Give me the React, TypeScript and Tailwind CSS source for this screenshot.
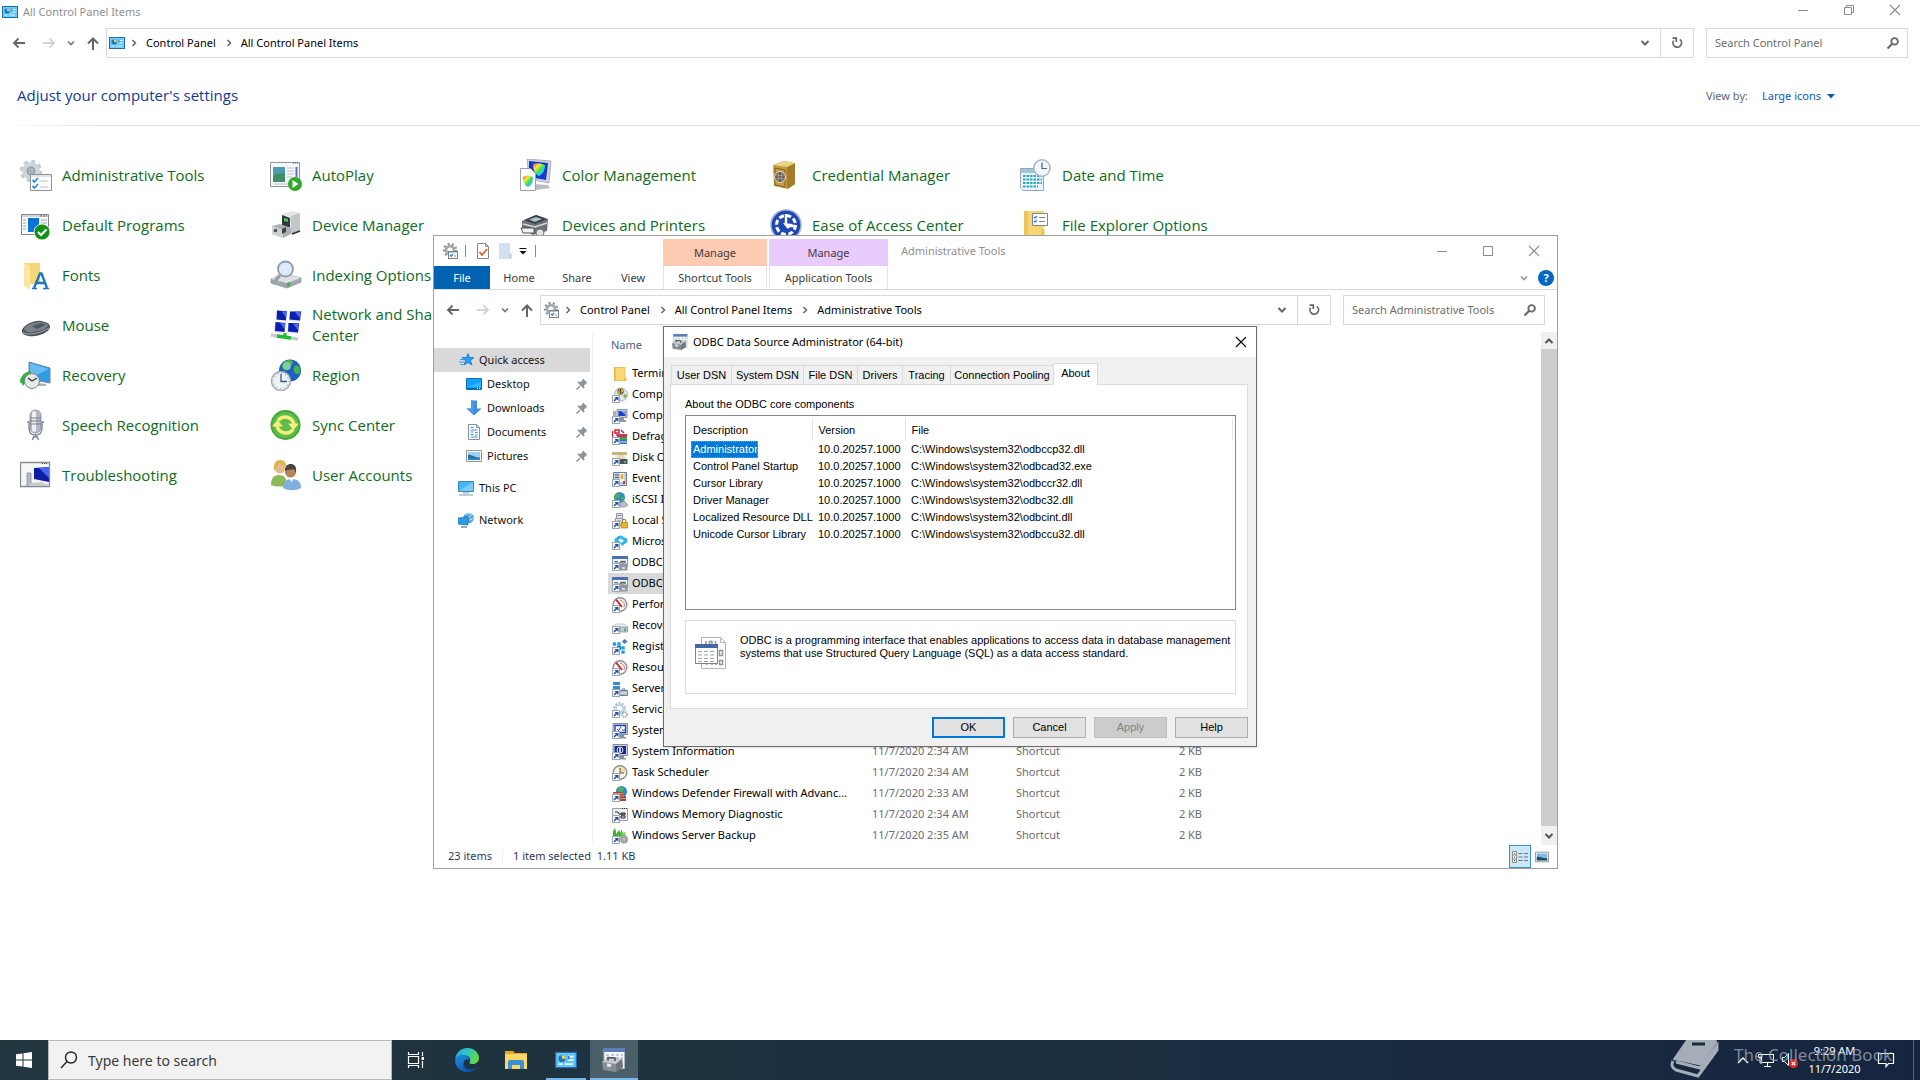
import type { ReactNode } from 'react';

type IconProps = { className?: string };
const UI = "font-['Noto_Sans','Open_Sans',sans-serif]";

function Svg({ size = 16, box = size, className = '', children }: { size?: number; box?: number; className?: string; children: ReactNode }) {
  return (
    <svg width={size} height={size} viewBox={`0 0 ${box} ${box}`} fill="none" className={`shrink-0 ${className}`} aria-hidden="true">
      {children}
    </svg>
  );
}

/* ---------- Line glyphs ---------- */

const ArrowLeft = ({ className = '' }: IconProps) => (
  <Svg className={className}>
    <path d="M14 8H3M7.500 3.500L3 8l4.500 4.500" stroke="currentColor" strokeWidth="1.800" />
  </Svg>
);
const ArrowRight = ({ className = '' }: IconProps) => (
  <Svg className={className}>
    <path d="M2 8h11M8.500 3.500L13 8l-4.500 4.500" stroke="currentColor" strokeWidth="1.800" />
  </Svg>
);
const ArrowUp = ({ className = '' }: IconProps) => (
  <Svg className={className}>
    <path d="M8 15V4M3 8.500L8 3.500l5 5" stroke="currentColor" strokeWidth="2" />
  </Svg>
);
const ChevronDown = ({ className = '', thin }: IconProps & { thin?: boolean }) => (
  <Svg size={12} className={className}>
    <path d={thin ? 'M3 4.500l3 3 3-3' : 'M2.500 4l3.500 3.500L9.500 4'} stroke="currentColor" strokeWidth={thin ? 1.6 : 2} />
  </Svg>
);
const ChevronRight = () => (
  <Svg size={8} className="text-[#666]">
    <path d="M2.500 1l3 3-3 3" stroke="currentColor" strokeWidth="1.500" />
  </Svg>
);
const Refresh = () => (
  <Svg size={14} className="text-[#666]">
    <path d="M9.800 3.400A4.300 4.300 0 1 1 3.600 4.600" stroke="currentColor" strokeWidth="1.700" />
    <path d="M2.500 2.200h3.800V6" stroke="currentColor" strokeWidth="1.700" />
  </Svg>
);
const Magnifier = () => (
  <Svg size={14} className="text-[#666]">
    <circle cx="8.600" cy="5.400" r="3.300" stroke="currentColor" strokeWidth="1.800" />
    <path d="M6.200 7.800L1.500 12.500" stroke="currentColor" strokeWidth="2" />
  </Svg>
);
const Minimise = () => (
  <Svg size={12}>
    <path d="M1 6.500h10" stroke="currentColor" />
  </Svg>
);
const Maximise = () => (
  <Svg size={12}>
    <path d="M1.500 1.500h9v9h-9z" stroke="currentColor" />
  </Svg>
);
const Restore = () => (
  <Svg size={12}>
    <path d="M1.500 3.500h7v7h-7zM3.500 3.500v-2h7v7h-2" stroke="currentColor" />
  </Svg>
);
const Close = () => (
  <Svg size={12}>
    <path d="M1 1l10 10M11 1L1 11" stroke="currentColor" strokeWidth="1.100" />
  </Svg>
);

/* ---------- Small colour icons ---------- */

const PanelIcon = ({ size = 16 }: { size?: number }) => (
  <Svg size={size} box={16}>
    <rect x="0.500" y="2.500" width="15" height="11" fill="#8ad6fa" stroke="#1b6fb0" />
    <rect x="1.500" y="3.500" width="13" height="9" fill="#5fc3f5" />
    <circle cx="5" cy="7" r="2.500" fill="#1b76bd" />
    <path d="M5 7V4.500A2.500 2.500 0 0 1 7.500 7z" fill="#ffd24a" />
    <path d="M9.500 5.500h4M9.500 8h4" stroke="#fff" strokeWidth="1.200" />
    <path d="M2.500 11h3M7 11h6" stroke="#e8f7ff" strokeWidth="1.200" />
    <path d="M10 5v2.500" stroke="#1b76bd" />
  </Svg>
);

const Tick = ({ d, color = '#2f7fd0', w = 1.3 }: { d: string; color?: string; w?: number }) => <path d={d} stroke={color} strokeWidth={w} />;

const ToolsIcon = () => (
  <Svg>
    <circle cx="8" cy="7" r="6" stroke="#8b9297" strokeWidth="2.400" strokeDasharray="2 2.190" />
    <circle cx="8" cy="7" r="3.900" stroke="#a3aaaf" strokeWidth="2.600" />
    <rect x="6.500" y="8.500" width="9" height="7" fill="#fff" stroke="#7c8388" />
    <path d="M7 9.500h8" stroke="#b6c4cf" />
    <Tick d="M8 12l1.200 1.200L11 11" />
    <path d="M12 13h2" stroke="#5da2dd" />
  </Svg>
);

function Linked({ children }: { children: ReactNode }) {
  return (
    <Svg>
      {children}
      <rect x="0.500" y="8.500" width="7" height="7" fill="#fff" stroke="#9aa6b3" />
      <path d="M2 14L5 11" stroke="#27509c" strokeWidth="1.600" />
      <path d="M2.500 10h4v4z" fill="#27509c" />
    </Svg>
  );
}

const FolderIcon = () => (
  <Svg>
    <path d="M2 1h11v10l1 0v4H2z" fill="#fbd976" />
    <path d="M2 1h2v14H2z" fill="#f0c457" />
    <path d="M2.500 1.500h10.500v9.500M2.500 1.500v13h11.500" stroke="#e4b64c" strokeWidth="0.800" />
    <path d="M12 11.500h2.500V15H12z" fill="#f2c14e" />
  </Svg>
);
const ComponentIcon = () => (
  <Linked>
    <circle cx="9" cy="7.500" r="6.500" fill="#dfe6ec" stroke="#a9b4bd" />
    <circle cx="8.500" cy="4.500" r="3" fill="#f4c531" stroke="#94751a" />
    <path d="M6 3l5 3M8.500 2v5" stroke="#3f4d5b" />
    <circle cx="13" cy="9" r="1.700" fill="#6cb348" />
  </Linked>
);
const ComputerIcon = () => (
  <Linked>
    <path d="M5 1.500h10v8H5z" fill="#c9ced6" stroke="#8c95a1" />
    <path d="M6.500 3h7v5h-7z" fill="#1c3fc6" />
    <path d="M9 3h4.500v4z" fill="#7fa1ff" />
    <path d="M1 3h3v8H1z" fill="#a8b0b8" />
    <path d="M8 10h4v2h2v2H8z" fill="#8d969f" />
  </Linked>
);
const DefragIcon = () => (
  <Linked>
    <path d="M0.500 2v6M3 1h4v3H3z" stroke="#d11f2f" strokeWidth="1.500" />
    <path d="M9 1l3 3M4 6h8" stroke="#8a3aa8" strokeWidth="1.500" />
    <path d="M5 5h10v4H5z" fill="#d23346" />
    <path d="M7 8h8v3H7z" fill="#3a9f4a" />
    <path d="M8 11h7v4H8z" fill="#376fc2" />
    <path d="M8 13h7" stroke="#d9dee3" />
  </Linked>
);
const DiskIcon = () => (
  <Linked>
    <path d="M0 2h15v3H0z" fill="#c6b37d" />
    <path d="M5 5h7l2 4H4z" fill="#e5dcbc" />
    <path d="M7 9h8.500v5H7z" fill="#4a5158" />
    <path d="M12 12h2" stroke="#56d95a" strokeWidth="1.500" />
  </Linked>
);
const EventIcon = () => (
  <Linked>
    <path d="M1.500 1.500h13v13h-13z" fill="#c3cfdf" stroke="#6a7f9d" />
    <path d="M3 4h4M3 6.500h4" stroke="#3f5f94" />
    <path d="M8 2h4v9H8z" fill="#f4f7fb" />
    <path d="M10 3v5" stroke="#e9a713" strokeWidth="2.500" />
    <path d="M11 10h2v3h-2z" fill="#d23535" />
  </Linked>
);
const GlobeDriveIcon = () => (
  <Linked>
    <circle cx="7.500" cy="5.500" r="5.500" fill="#2f87c9" />
    <path d="M4 2c3-1 5 0 4 2S4 6 3 8 2 4 4 2zM9 5c2-1 4 1 3 3l-2 2z" fill="#4fae48" />
    <path d="M8 11l4-2 4 4-3 2H8z" fill="#b8c1ca" stroke="#7c8791" strokeWidth="0.700" />
  </Linked>
);
const PolicyIcon = () => (
  <Linked>
    <path d="M4.500 0.500h6v5h-6zM3.500 5.500h7v7h-7z" fill="#e2e6ea" stroke="#8d959d" />
    <path d="M5.500 2.500h4M5 8h4" stroke="#77818b" />
    <path d="M9 9.500h6.500v5.500H9z" fill="#e8b429" stroke="#b07f12" strokeWidth="0.700" />
    <path d="M10.500 9.500V8a1.700 1.700 0 0 1 3.400 0v1.500" stroke="#a27514" />
  </Linked>
);
const CloudIcon = () => (
  <Linked>
    <path d="M4 9a3 3 0 0 1 .5-5.500A4.500 4.500 0 0 1 12 3.500a3.200 3.200 0 0 1 1 6.300L10 12l-2-3z" fill="#36b4e5" />
    <path d="M6 6l3-1.500L12 7 9 9z" fill="#e9f8ff" />
  </Linked>
);
const OdbcIcon = () => (
  <Linked>
    <path d="M0.500 1.500h15v10h-15z" fill="#f3f6f9" stroke="#8c9dae" />
    <path d="M0 1h16v3H0z" fill="#4a6fae" />
    <path d="M2 6.500h4M3 8h9" stroke="#6c7883" />
    <path d="M7 8.500h8.500v7H8z" fill="#8f979e" />
    <path d="M9 8V6.500h4V8" stroke="#596269" strokeWidth="1.300" />
    <path d="M10 12h3v2h-3z" fill="#d7dce0" />
  </Linked>
);
const GaugeIcon = () => (
  <Linked>
    <circle cx="8" cy="7.500" r="6.800" fill="#fbfbfb" stroke="#8e949a" strokeWidth="1.500" />
    <path d="M4 2.500l6 7.500" stroke="#d3242a" strokeWidth="2" />
    <path d="M8 3a5 5 0 0 1 4 7" stroke="#c0795c" />
  </Linked>
);
const DriveIcon = () => (
  <Linked>
    <path d="M1 8l3-2h8l3.500 2v5H1z" fill="#f0f1f2" stroke="#b9bec3" strokeWidth="0.800" />
    <path d="M8 9h7.500v5H8z" fill="#c3c9ce" stroke="#8c949b" strokeWidth="0.800" />
    <path d="M13 10.500v2.500" stroke="#32a642" strokeWidth="1.600" />
  </Linked>
);
const RegistryIcon = () => (
  <Linked>
    <path d="M0.500 3h4v4h-4zM5 3h4v4H5zM9 7h4v4H9zM9 11h4v4H9z" fill="#19a0d8" stroke="#fff" strokeWidth="0.600" />
    <path d="M5 7h4v4H5z" fill="#1385b8" />
    <path d="M12.500 0l3 2.500-3 2.500-2.500-2.500z" fill="#3b7fb8" />
  </Linked>
);
const ServerIcon = () => (
  <Linked>
    <path d="M1 1h7v3H1zM1 5h7v3H1z" fill="#2f8fd3" />
    <path d="M7.500 9.500h8v5h-8z" fill="#a8b9c6" stroke="#6a8294" />
    <path d="M10 9V8h3v1" stroke="#6a8294" />
    <path d="M8 12h7" stroke="#e9f0f5" />
  </Linked>
);
const ServicesIcon = () => (
  <Linked>
    <circle cx="7.500" cy="6.500" r="5.300" stroke="#9fc0d8" strokeWidth="2.200" strokeDasharray="1.900 1.430" />
    <circle cx="7.500" cy="6.500" r="3.600" stroke="#b5d1e4" strokeWidth="1.800" />
    <circle cx="12.500" cy="12.500" r="2.500" stroke="#93a9b9" strokeWidth="1.800" strokeDasharray="1.300 0.700" />
  </Linked>
);
const SysConfigIcon = () => (
  <Linked>
    <path d="M1 0.500h14.500v11H1z" fill="#cfd4da" stroke="#858d96" />
    <path d="M3 2.500h10.500v7H3z" fill="#fff" stroke="#1a3dbb" strokeWidth="1.300" />
    <path d="M5 6l1.500 1.500L9 4M10 7h3" stroke="#1a3dbb" />
    <path d="M8 12h4v2h2v1.500H8z" fill="#8b939c" />
  </Linked>
);
const SysInfoIcon = () => (
  <Linked>
    <path d="M1 0.500h14.500v11H1z" fill="#cfd4da" stroke="#858d96" />
    <path d="M2.500 2h11.500v8H2.500z" fill="#14288f" />
    <circle cx="8" cy="6" r="3" stroke="#dfe6ff" />
    <path d="M8 4v4.500" stroke="#fff" strokeWidth="1.500" />
    <path d="M8 12h4v2h2v1.500H8z" fill="#8b939c" />
  </Linked>
);
const ClockIcon = () => (
  <Linked>
    <circle cx="8" cy="7.500" r="6.800" fill="#f6f2e4" stroke="#8d9094" strokeWidth="1.400" />
    <path d="M8 7.500V2a5.500 5.500 0 0 1 5.500 5.500z" fill="#f3df9c" />
    <path d="M8 3v5h4" stroke="#555" />
  </Linked>
);
const FirewallIcon = () => (
  <Linked>
    <circle cx="9.500" cy="5.500" r="5.500" fill="#2f87c9" />
    <path d="M8 1c3 0 5 1 4 3s-4 1-4 3-4-5 0-6z" fill="#55b24e" />
    <path d="M1 6h10v4h3v5H7V8H1z" fill="#a54a36" />
    <path d="M1 7.500h10M7 10h5M7 12.500h7" stroke="#e2b7a8" strokeWidth="0.700" />
  </Linked>
);
const MemoryIcon = () => (
  <Linked>
    <path d="M0.500 1.500h15v12h-15z" fill="#f1f2f4" stroke="#999fa6" />
    <path d="M10 1.500h5" stroke="#444" strokeDasharray="1 1" />
    <path d="M3 5h3l1 2h6M9 6h4v2H9zM9 9h4v2H9z" stroke="#2d2d2d" />
  </Linked>
);
const BackupIcon = () => (
  <Linked>
    <path d="M1 8V3l2-3 1 3v3l3-4 2 3V1l2 4v4z" fill="#46b338" />
    <path d="M9 6l4-2 1 5-3 1z" fill="#7fcf5d" />
    <circle cx="12" cy="11.500" r="4" fill="#9aa3aa" />
    <circle cx="12" cy="11.500" r="1.500" fill="#e2b6a0" />
  </Linked>
);

/* ---------- Navigation pane icons ---------- */

const StarIcon = () => (
  <Svg>
    <path d="M9 1.500l1.500 4 4.500 0-3.500 3 1.500 4.500-4-2.500L5 13l1.500-4.500L3 5.500l4.500 0z" fill="#2a9df4" stroke="#1479c9" strokeWidth="0.800" />
    <path d="M1 7.500h4M0 10h5M1.500 12.500h3" stroke="#2a9df4" />
  </Svg>
);
const DesktopIcon = () => (
  <Svg>
    <path d="M0.500 2.500h15v11h-15z" fill="#12a1f5" stroke="#0a6fc4" />
    <path d="M1 11l14-5v5z" fill="#35b6ff" />
    <path d="M1 12.500h14" stroke="#0b5ea6" />
    <path d="M11 12.500h3" stroke="#fff" strokeDasharray="1 1" />
  </Svg>
);
const DownloadIcon = () => (
  <Svg>
    <path d="M5 0.500h6v8h4.500L8 15.500.5 8.500H5z" fill="#3f8ede" />
    <path d="M5 0.500h3v15L.5 8.500H5z" fill="#4c98e4" />
  </Svg>
);
const DocumentIcon = () => (
  <Svg>
    <path d="M2.500 0.500h8l3 3v12h-11z" fill="#fff" stroke="#86919b" />
    <path d="M10.500 0.500v3h3" stroke="#86919b" />
    <path d="M4.500 3.500h3M4.500 6h7M4.500 8h3M9 8.500h2.500M4.500 10.500h3M9 11h2.500M4.500 13h7" stroke="#3a96d2" />
  </Svg>
);
const PictureIcon = () => (
  <Svg>
    <path d="M0.500 2.500h15v11h-15z" fill="#fff" stroke="#8d959c" />
    <path d="M2 4h12v8H2z" fill="#9ad0f5" />
    <path d="M2 7c3-1 6 3 12 2.500V12H2z" fill="#2d6a8a" />
    <path d="M2 10h12v2H2z" fill="#1d8bd0" />
  </Svg>
);
const PcIcon = () => (
  <Svg>
    <path d="M0.500 1.500h15v10h-15z" fill="#4cb7f5" stroke="#3c86b8" />
    <path d="M1 11L15 2v9z" fill="#7accfb" />
    <path d="M5 13h6M1 15h14" stroke="#84a0b4" strokeWidth="1.200" />
  </Svg>
);
const NetworkIcon = () => (
  <Svg>
    <circle cx="10.500" cy="6" r="5.300" fill="#4f9fd4" />
    <path d="M7 3c2-2 6-2 6 0s-4 2-4 4M11 8c2 0 4-2 4-2" stroke="#a8dbf7" strokeWidth="1.300" />
    <path d="M0 6l10-1v8L0 12z" fill="#2f9be6" stroke="#1b6fae" strokeWidth="0.700" />
    <path d="M3 15h6" stroke="#557b93" strokeWidth="1.300" />
  </Svg>
);
const PinIcon = () => (
  <Svg size={12} className="text-[#8a949d]">
    <path d="M7 0.500L11.500 5l-1.500.5-2 2 .5 2.500-1 .5L1.500 4.500 2 3.500l2.500.5 2-2z" fill="currentColor" />
    <path d="M4 8L0.500 11.500" stroke="currentColor" strokeWidth="1.500" />
  </Svg>
);

/* ---------- Large control panel icons ---------- */

const Big = ({ children }: { children: ReactNode }) => <Svg size={32}>{children}</Svg>;

const AdminTools = () => (
  <Big>
    <circle cx="11" cy="12" r="9.500" stroke="#c3cbd1" strokeWidth="3.500" strokeDasharray="3.900 3.560" />
    <circle cx="11" cy="12" r="6.500" stroke="#cfd6db" strokeWidth="5" />
    <circle cx="11" cy="12" r="4" stroke="#8e989f" fill="#aab4bb" />
    <path d="M10.500 15.500h21v16h-21z" fill="#fbfcfd" stroke="#8c9297" />
    <path d="M11 17h20" stroke="#d4dde4" strokeWidth="1.500" />
    <Tick d="M12.500 21l2 2 3.500-4M12.500 27l2 2 3.500-4" color="#3a8edb" w={1.8} />
    <path d="M19.500 22h8M19.500 28h8" stroke="#b9bfc4" />
  </Big>
);
const AutoPlay = () => (
  <Big>
    <path d="M0.500 3.500h29v24h-29z" fill="#f7f9fa" stroke="#8c9499" />
    <path d="M23 4h6" stroke="#555" strokeDasharray="1 1" />
    <path d="M3 8h12v15H3z" fill="#4f9ab0" />
    <path d="M3 17c4-4 8-1 12-3v9H3z" fill="#3f8f66" />
    <path d="M17 9h7M17 12h7M17 15h7M17 18h5M4 25h16" stroke="#b8c0c6" />
    <path d="M26.500 8v10" stroke="#5470c2" strokeWidth="2" />
    <circle cx="25" cy="25" r="7" fill="#31a82a" />
    <path d="M22.500 21l6 4-6 4z" fill="#fff" />
  </Big>
);
const ColorMgmt = () => (
  <Big>
    <defs>
      <linearGradient id="rainbow" x1="0" y1="0" x2="1" y2="1">
        <stop offset="0" stopColor="#ff3a3a" />
        <stop offset="0.300" stopColor="#ffe83a" />
        <stop offset="0.550" stopColor="#39e06a" />
        <stop offset="0.800" stopColor="#37b9ff" />
        <stop offset="1" stopColor="#b744ff" />
      </linearGradient>
    </defs>
    <path d="M7 0l24 2-2 22-20-4z" fill="#cfd4dc" stroke="#9aa2ad" strokeWidth="0.800" />
    <path d="M9 2l19 2-2 17-17-3z" fill="#1437cf" />
    <path d="M13 5c6-2 9 0 12 1 0 6-2 9-6 11-4-2-6-6-6-12z" fill="url(#rainbow)" />
    <path d="M14 25l14 1 2 3-14 2z" fill="#b7bdc5" />
    <path d="M0.500 9.500h10l5 5v17h-15z" fill="#fff" stroke="#9aa0a8" />
    <path d="M3 18c4-2 7-2 10 0 0 5-1 8-5 10-4-2-5-5-5-10z" fill="url(#rainbow)" />
  </Big>
);
const Credential = () => (
  <Big>
    <path d="M3 6L14 2l11 2v21l-7 5-14-3z" fill="#c39a3f" />
    <path d="M17 8l8-4v21l-8 5z" fill="#a37c2a" />
    <path d="M3 6L14 2l11 2-8 4z" fill="#ebd182" />
    <path d="M5 9l10 2v17l-10-2z" stroke="#7e6327" />
    <circle cx="10" cy="18" r="5.500" fill="#7f7868" stroke="#dfd8c3" />
    <circle cx="10" cy="18" r="2.500" fill="#c9c4b6" />
    <path d="M10 13v10M5.500 18h9" stroke="#4b463b" />
  </Big>
);
const DateTime = () => (
  <Big>
    <path d="M0.500 9.500h23v22H3l-2.500-3z" fill="#eaf6fb" stroke="#93a6b2" />
    <path d="M1 10h22v4H1z" fill="#9fc6da" />
    <path d="M3 17h19M3 20.500h19M3 24h19M3 27.500h15" stroke="#2fa7bd" strokeWidth="2.200" strokeDasharray="2.500 1" />
    <circle cx="22" cy="9" r="8.200" fill="#f2f6f9" stroke="#aab8c3" strokeWidth="1.600" />
    <path d="M22 3.500V9.500h5" stroke="#4c6072" strokeWidth="1.200" />
  </Big>
);
const DefaultPrograms = () => (
  <Big>
    <path d="M1.500 5.500h27v20h-27z" fill="#f8fafb" stroke="#80878d" />
    <path d="M2 7h26" stroke="#cfd7dd" strokeWidth="2" />
    <path d="M20 7h7" stroke="#555" strokeDasharray="2 1" />
    <path d="M8 9h11v14H8z" fill="#0b72d8" />
    <path d="M3 11h3M3 14h3M3 17h3M3 20h3M21 11h6M21 14h6" stroke="#9aa2a8" />
    <circle cx="22" cy="23" r="8" fill="#13911a" stroke="#fff" strokeWidth="0.800" />
    <path d="M18 23l3 3 5.500-5.500" stroke="#fff" strokeWidth="2" />
  </Big>
);
const DeviceManager = () => (
  <Big>
    <path d="M12 5l10-3 8 2v18l-9 3-9-5z" fill="#e2e4e6" />
    <path d="M21 7l9-3v18l-9 3z" fill="#c4c7ca" />
    <path d="M12 6l8 3v9h-8z" fill="#31373b" />
    <path d="M14 9l4 1v3l-4-1z" fill="#46c85a" />
    <path d="M2 17l8-2 11 4v6l-8 4-11-4z" fill="#a9aeb3" />
    <path d="M2 17l11 4v8L2 25z" fill="#cfd2d5" />
    <circle cx="5.500" cy="21.500" r="1.800" fill="#4a5057" />
    <path d="M12 20l4-2v5l-4 2z" fill="#3c4248" />
    <path d="M22 25l8-3" stroke="#2c2f32" strokeWidth="1.500" />
  </Big>
);
const Printers = () => (
  <Big>
    <path d="M2 12l14-6 12 4-1 12-14 4-11-6z" fill="#6c7378" />
    <path d="M4 11L16 6l11 4-12 5z" fill="#3a3f43" />
    <path d="M9 10.500l7-2.500 6 2-7 3z" fill="#a9c1cf" />
    <path d="M3 15l12 3 12-4" stroke="#d4d9dc" strokeWidth="1.500" />
    <path d="M1 19h13v5H3z" fill="#eef1f3" stroke="#555" />
    <circle cx="20" cy="24" r="4" fill="#dfe3e6" stroke="#6c7378" />
  </Big>
);
const EaseOfAccess = () => (
  <Big>
    <circle cx="16" cy="16" r="15" fill="#1e46b5" stroke="#9cadd3" strokeWidth="1.500" />
    <circle cx="16" cy="16" r="9.500" stroke="#fff" strokeWidth="3" strokeDasharray="5 2.460" />
    <path d="M16 5v12M16 17h9" stroke="#fff" strokeWidth="2.500" />
    <path d="M13 14l5 6 5-5z" fill="#fff" />
  </Big>
);
const ExplorerOptions = () => (
  <Big>
    <path d="M4 2h20v26l2 0v3H4z" fill="#f7d774" />
    <path d="M4 2h4v29H4z" fill="#edc559" />
    <path d="M12.500 4.500h15v12h-15z" fill="#fff" stroke="#7b858d" />
    <Tick d="M14 8l1 1 2-2M14 12l1 1 2-2" />
    <path d="M19 8.500h6M19 12.500h6" stroke="#7b858d" />
    <path d="M22 20c3 0 3 4 2 8h-3z" fill="#eebf48" />
  </Big>
);
const Fonts = () => (
  <Big>
    <path d="M4 4h16v21H10l0 6-6-5z" fill="#f6d679" />
    <path d="M4 4l6 3v24l-6-4z" fill="#fbe6a4" />
    <path d="M14 29L20 14.500h1.500L27 29M16 24h8.500" stroke="#1b75bc" strokeWidth="2.300" />
    <path d="M12 29.500h5M23 29.500h6" stroke="#1b75bc" strokeWidth="1.400" />
  </Big>
);
const Indexing = () => (
  <Big>
    <path d="M1 20l13-5 17 4v4l-14 6L1 24z" fill="#a3a8ac" stroke="#878d92" strokeWidth="0.700" />
    <path d="M1 20l13-5 17 4-14 5z" fill="#dfe2e5" />
    <path d="M17 24l3-1v4l-3 1z" fill="#37bf3c" />
    <circle cx="15.500" cy="10" r="7.500" fill="#d9eaf9" fillOpacity="0.900" stroke="#8f9cab" strokeWidth="1.800" />
    <path d="M10 16L3 25" stroke="#98a1aa" strokeWidth="3.500" />
  </Big>
);
const Mouse = () => (
  <Big>
    <path d="M2 21C4 16 14 11 21 12c6 1 9 3 9 6s-6 8-15 9C8 28 1 26 2 21z" fill="#4c5157" />
    <path d="M4 20c3-5 11-7 17-7 5 1 7 2 7 4-3 4-10 5-14 6-5 1-9 0-10-3z" fill="#7b8289" />
    <path d="M12 17l9-3 5 2-9 4z" fill="#4a5863" />
    <path d="M3 23c4 4 16 2 26-4" stroke="#a9b0b6" />
  </Big>
);
const NetCenter = () => (
  <Big>
    <path d="M7 1l11 1-1 10-11-1zM20 2l12 0-2 11-11-1zM5 13l11 1-1 10-11-1zM18 14l12 0-2 11-11-1z" fill="#dfe3ea" />
    <path d="M7 1.500l10.500 1-1 9-10-1zM20 2.500l11 0-1 9-10.500-1zM5.500 13l10.500 1-1 9-10-1zM18.500 14l10.500 0-1 9.500-10-1z" fill="#0a1fae" />
    <path d="M12 2.500l5 .5-1 6zM25 3l5.500 0-1 6zM10 14l5.500.500-1 6zM23 14.500l5.500 0-1 6.500z" fill="#4b6bf0" />
    <path d="M12 12.500l18 1M18 1l-3 24" stroke="#fff" strokeWidth="1.500" />
    <path d="M1 26l10 2M20 29l8 1" stroke="#c8ccd0" strokeWidth="3.500" />
    <path d="M7 27l14 2" stroke="#1ebb34" strokeWidth="3.500" />
    <path d="M15 24v4" stroke="#1ebb34" strokeWidth="3" />
  </Big>
);
const Recovery = () => (
  <Big>
    <path d="M9 3l21 6v15L9 20z" fill="#2f9ce6" stroke="#6a8799" />
    <path d="M10 4l19 6-19 9z" fill="#67bdf3" />
    <path d="M18 24l8 1v2H16z" fill="#a9b2b9" />
    <path d="M2 24a9 9 0 0 1 9-10" stroke="#35ae3b" strokeWidth="3.500" />
    <path d="M0 20h8l-5 7z" fill="#35ae3b" />
    <circle cx="12" cy="22" r="7.500" fill="#e5e9ec" stroke="#7a858d" />
    <path d="M12 22l-4-3M12 22l5-3" stroke="#333" strokeWidth="1.300" />
  </Big>
);
const Region = () => (
  <Big>
    <circle cx="20" cy="11.500" r="11" fill="#1b5fc4" />
    <path d="M14 3c4-3 8-2 9 0s-3 3-3 6-5 3-7 1-1-5 1-7zM25 7c3-2 5 1 5 5s-3 4-5 2-2-5 0-7z" fill="#45b24d" />
    <circle cx="17" cy="7" r="4" fill="#bfe8ff" fillOpacity="0.500" />
    <circle cx="11" cy="22" r="9.500" fill="#eef2f5" stroke="#9da8b1" strokeWidth="1.400" />
    <path d="M11 15v7.500h6" stroke="#3a5d84" strokeWidth="1.300" />
    <circle cx="11" cy="22" r="7.500" stroke="#788792" strokeDasharray="1 2.930" />
  </Big>
);
const Speech = () => (
  <Big>
    <path d="M7 13h2v6c0 4 2 7 6.500 7S22 23 22 19v-6h2" stroke="#7e8894" strokeWidth="1.400" />
    <rect x="10" y="1" width="11" height="23" rx="5.500" fill="#b4bac1" stroke="#7e8894" strokeWidth="0.800" />
    <rect x="12" y="2" width="4" height="21" rx="2" fill="#eef0f2" />
    <path d="M10 9h11M10 12h11M10 15h11" stroke="#7b838b" />
    <path d="M15.500 25v3M12.500 31l1-3h4l1 3" stroke="#7e8894" strokeWidth="1.400" />
  </Big>
);
const Sync = () => (
  <Big>
    <circle cx="15.500" cy="16" r="15" fill="#43a936" />
    <circle cx="15.500" cy="16" r="13" fill="#5fbd4b" />
    <path d="M8 11.500a9 9 0 0 1 16 4M23 20.500a9 9 0 0 1-16-4" stroke="#f8ee7c" strokeWidth="3.500" />
    <path d="M18 14.500h11l-5.500 6.500zM2 17.500L7.500 11 13 17.500z" fill="#f8ee7c" />
  </Big>
);
const Trouble = () => (
  <Big>
    <path d="M0.500 3.500h29v24h-29z" fill="#f5f6f7" stroke="#858b90" strokeWidth="1.300" />
    <path d="M22 4.500h6" stroke="#444" strokeDasharray="1 1" />
    <path d="M7 14h4v13H7z" fill="#b8bdc3" stroke="#7d838a" strokeWidth="0.700" />
    <path d="M14 9l15-1v15l-15-3z" fill="#0e1da6" />
    <path d="M19 9l10-1v11z" fill="#4a68ee" />
    <path d="M11 24l10-1 8 3v1H8z" fill="#c7ccd1" />
  </Big>
);
const Users = () => (
  <Big>
    <path d="M1 26c0-7 3-10 8-10s8 3 8 10c-5 2-11 2-16 0z" fill="#8dbb58" />
    <circle cx="10" cy="9" r="5.500" fill="#e6b98f" />
    <path d="M4 12c-1-8 2-11 6-11s6 2 6 6c-3 0-6-1-7-3-1 2-3 4-5 8z" fill="#d9b54b" />
    <path d="M13 29c0-6 3-9 9-9s9 3 9 9c-5 3-13 3-18 0z" fill="#7fb1de" />
    <path d="M19 19h5l-2.500 4z" fill="#fff" />
    <circle cx="20.500" cy="13" r="5.500" fill="#b98158" />
    <path d="M15 12c0-6 3-7 6-7s6 2 5 9l-2-4c-3 1-6 0-9 2z" fill="#4a4440" />
  </Big>
);

const panelRows: [string, () => ReactNode][][] = [
  [
    ['Administrative Tools', AdminTools],
    ['AutoPlay', AutoPlay],
    ['Color Management', ColorMgmt],
    ['Credential Manager', Credential],
    ['Date and Time', DateTime],
  ],
  [
    ['Default Programs', DefaultPrograms],
    ['Device Manager', DeviceManager],
    ['Devices and Printers', Printers],
    ['Ease of Access Center', EaseOfAccess],
    ['File Explorer Options', ExplorerOptions],
  ],
  [
    ['Fonts', Fonts],
    ['Indexing Options', Indexing],
  ],
  [
    ['Mouse', Mouse],
    ['Network and Sharing Center', NetCenter],
  ],
  [
    ['Recovery', Recovery],
    ['Region', Region],
  ],
  [
    ['Speech Recognition', Speech],
    ['Sync Center', Sync],
  ],
  [
    ['Troubleshooting', Trouble],
    ['User Accounts', Users],
  ],
];

/* ---------- Shared window parts ---------- */

function NavBar({ icon, crumbs, search }: { icon: ReactNode; crumbs: string[]; search: string }) {
  return (
    <div className="flex h-[30px] pr-3">
      <nav className="flex w-[106px] shrink-0 items-center pl-[11px]">
        <button aria-label="Back" className="text-[#666]"><ArrowLeft /></button>
        <button aria-label="Forward" className="ml-3.5 text-[#d4d4d4]"><ArrowRight /></button>
        <button aria-label="Recent" className="ml-2 text-[#777]"><ChevronDown thin /></button>
        <button aria-label="Up" className="ml-2 text-[#666]"><ArrowUp /></button>
      </nav>
      <div className="flex min-w-0 flex-1 items-center border border-[#d9d9d9] pl-0.5">
        {icon}
        <div className="flex flex-1 items-center gap-[9px] pl-[5px]">
          {crumbs.map((c) => (
            <div key={c} className="flex items-center gap-2">
              <ChevronRight />
              <a href="#" className="text-[11px] text-black">{c}</a>
            </div>
          ))}
        </div>
        <button aria-label="History" className="mr-[9px] text-[#666]"><ChevronDown /></button>
        <button aria-label="Refresh" className="flex h-full w-[33px] items-center justify-center border-l border-[#d9d9d9]"><Refresh /></button>
      </div>
      <label className="ml-3 flex w-[202px] shrink-0 items-center border border-[#d9d9d9] pr-[7px] pl-2">
        <input aria-label={search} placeholder={search} className="min-w-0 flex-1 text-[11px] outline-none placeholder:text-[#6d6d6d]" />
        <Magnifier />
      </label>
    </div>
  );
}

function WindowButtons({ restored, className }: { restored?: boolean; className: string }) {
  return (
    <div className={`ml-auto flex text-[#8a8a8a] ${className}`}>
      <button aria-label="Minimise" className="flex w-[46px] items-center justify-center"><Minimise /></button>
      <button aria-label="Resize" className="flex w-[46px] items-center justify-center">{restored ? <Restore /> : <Maximise />}</button>
      <button aria-label="Close" className="flex w-[46px] items-center justify-center"><Close /></button>
    </div>
  );
}

/* ---------- Control panel ---------- */

function ControlPanel() {
  return (
    <main className="min-h-0 flex-1 bg-white">
      <header className="flex h-6 items-center gap-[5px] pl-0.5">
        <PanelIcon />
        <span className="text-[11px] text-[#8f8f8f]">All Control Panel Items</span>
        <WindowButtons restored className="mr-0.5 h-5 self-start" />
      </header>
      <div className="pt-1">
        <NavBar icon={<PanelIcon />} crumbs={['Control Panel', 'All Control Panel Items']} search="Search Control Panel" />
      </div>
      <div className="flex h-[67px] items-center justify-between pt-2 pr-[85px] pl-[17px]">
        <h1 className="font-['Open_Sans',sans-serif] text-[15px] text-[#123a91]">Adjust your computer's settings</h1>
        <div className="flex items-center pt-0.5 text-[11px]">
          <span className="text-[#5b6678]">View by:</span>
          <button className="ml-3.5 flex items-center gap-1.5 text-[#0a5bb5]">
            Large icons
            <svg width="8" height="5" viewBox="0 0 8 5" aria-hidden="true"><path d="M0 0h8L4 4.500z" fill="#0a5bb5" /></svg>
          </button>
        </div>
      </div>
      <div className="h-px bg-linear-to-r from-white via-[#dbe4ea] via-5% to-[#dbe4ea]" />
      <div className="pt-6 pl-5">
        {panelRows.map((row, i) => (
          <div key={i} className="flex">
            {row.map(([name, Icon]) => (
              <a key={name} href="#" className="flex h-[50px] w-[250px] items-center gap-2.5 font-['Open_Sans',sans-serif] text-[15px] leading-[21px] text-[#0f6b22]">
                <Icon />
                <span className="max-w-[190px]">{name}</span>
              </a>
            ))}
          </div>
        ))}
      </div>
    </main>
  );
}

/* ---------- Explorer ---------- */

const files: [string, string, () => ReactNode][] = [
  ['Terminal Services', '2:34', FolderIcon],
  ['Component Services', '2:34', ComponentIcon],
  ['Computer Management', '2:34', ComputerIcon],
  ['Defragment and Optimize Drives', '2:34', DefragIcon],
  ['Disk Cleanup', '2:34', DiskIcon],
  ['Event Viewer', '2:34', EventIcon],
  ['iSCSI Initiator', '2:34', GlobeDriveIcon],
  ['Local Security Policy', '2:34', PolicyIcon],
  ['Microsoft Azure Services', '2:34', CloudIcon],
  ['ODBC Data Sources (32-bit)', '2:34', OdbcIcon],
  ['ODBC Data Sources (64-bit)', '2:34', OdbcIcon],
  ['Performance Monitor', '2:34', GaugeIcon],
  ['RecoveryDrive', '2:34', DriveIcon],
  ['Registry Editor', '2:34', RegistryIcon],
  ['Resource Monitor', '2:34', GaugeIcon],
  ['Server Manager', '2:34', ServerIcon],
  ['Services', '2:34', ServicesIcon],
  ['System Configuration', '2:34', SysConfigIcon],
  ['System Information', '2:34', SysInfoIcon],
  ['Task Scheduler', '2:34', ClockIcon],
  ['Windows Defender Firewall with Advanc...', '2:33', FirewallIcon],
  ['Windows Memory Diagnostic', '2:34', MemoryIcon],
  ['Windows Server Backup', '2:35', BackupIcon],
];

const places: [string, () => ReactNode][] = [
  ['Desktop', DesktopIcon],
  ['Downloads', DownloadIcon],
  ['Documents', DocumentIcon],
  ['Pictures', PictureIcon],
];

function ToolTab({ label, className }: { label: string; className: string }) {
  return (
    <div className={`flex flex-col text-[11px] ${className}`}>
      <div className="h-[3px] bg-white" />
      <div className="flex h-[27px] items-center justify-center pt-0.5 text-[#4a3a3a]">Manage</div>
      <button className="h-[23px] border-x border-[#e4e4e4] bg-white pt-0.5 text-[#3b3b3b]">{label}</button>
    </div>
  );
}

function Explorer() {
  return (
    <section className="absolute top-[235px] left-[433px] flex h-[634px] w-[1125px] flex-col border border-[#a0a0a0] bg-white">
      <div className="box-content flex h-[53px] shrink-0 border-b border-[#dadbdc]">
        <div className="flex w-[229px] flex-col">
          <div className="flex h-[30px] items-center pl-2">
            <ToolsIcon />
            <span className="ml-[7px] h-3 w-px bg-[#8a8a8a]" />
            <Svg className="ml-[9px]">
              <path d="M2.500 0.500h8l3 3v12h-11z" fill="#fff" stroke="#84898d" />
              <path d="M10.500 0.500v3h3" stroke="#84898d" />
              <path d="M4.500 9l2.500 3L12 6" stroke="#e2582b" strokeWidth="1.700" />
            </Svg>
            <Svg className="ml-[7px]">
              <path d="M1 0h11v10h1.500v6H1z" fill="#d3dff3" />
              <path d="M11 11h2.500v4H11z" fill="#bccfec" />
            </Svg>
            <Svg size={8} className="ml-[5px]">
              <path d="M0.500 1.500h7" stroke="#111" />
              <path d="M0.500 4h7L4 7.500z" fill="#111" />
            </Svg>
            <span className="ml-2 h-3 w-px bg-[#8a8a8a]" />
          </div>
          <div className="flex h-[23px] text-[11px] text-[#3b3b3b]">
            <button className="w-14 bg-[#0063b1] pt-0.5 text-white">File</button>
            <button className="w-[58px] pt-0.5">Home</button>
            <button className="w-[58px] pt-0.5">Share</button>
            <button className="w-[54px] pt-0.5">View</button>
          </div>
        </div>
        <ToolTab label="Shortcut Tools" className="w-[104px] bg-[#fccbb2]" />
        <ToolTab label="Application Tools" className="ml-0.5 w-[119px] bg-[#e9cbfd]" />
        <div className="flex flex-1 flex-col">
          <div className="flex h-[30px] items-center pl-[13px]">
            <span className="text-[11px] text-[#8f8f8f]">Administrative Tools</span>
            <WindowButtons className="h-full" />
          </div>
          <div className="flex h-[23px] items-center justify-end gap-2 pr-[3px]">
            <button aria-label="Collapse ribbon" className="text-[#9a9a9a]"><ChevronDown thin /></button>
            <button aria-label="Help" className="flex size-4 items-center justify-center rounded-full bg-[#0067c5] text-[11px] leading-none font-bold text-white">?</button>
          </div>
        </div>
      </div>
      <div className="pt-[5px] pb-[7px]">
        <NavBar icon={<ToolsIcon />} crumbs={['Control Panel', 'All Control Panel Items', 'Administrative Tools']} search="Search Administrative Tools" />
      </div>
      <div className="flex min-h-0 flex-1">
        <aside className="w-[159px] shrink-0 border-r border-[#f0f0f0] pt-4 text-[11px] text-[#111]">
          <a href="#" className="mr-0.5 flex h-6 items-center gap-1 bg-[#d9d9d9] pl-[25px]"><StarIcon />Quick access</a>
          {places.map(([name, Icon]) => (
            <a key={name} href="#" className="flex h-6 items-center gap-[5px] pr-1 pl-8">
              <Icon />
              <span className="flex-1">{name}</span>
              <PinIcon />
            </a>
          ))}
          <a href="#" className="mt-2 flex h-6 items-center gap-[5px] pl-6"><PcIcon />This PC</a>
          <a href="#" className="mt-2 flex h-6 items-center gap-[5px] pl-6"><NetworkIcon />Network</a>
        </aside>
        <div className="min-w-0 flex-1 overflow-hidden pl-[15px]">
          <table className="w-[599px] table-fixed border-collapse text-left text-[11px] text-[#6d6d6d]">
            <colgroup>
              <col className="w-[258px]" />
              <col className="w-[144px]" />
              <col className="w-[115px]" />
              <col className="w-[82px]" />
            </colgroup>
            <thead>
              <tr className="h-[31px] align-top leading-[26px] text-[#4c607a]">
                <th className="pl-[3px] font-normal">Name</th>
                <th className="pl-1.5 font-normal">Date modified</th>
                <th className="pl-1.5 font-normal">Type</th>
                <th className="pl-1.5 font-normal">Size</th>
              </tr>
            </thead>
            <tbody>
              {files.map(([name, time, Icon], i) => (
                <tr key={name} className={i === 10 ? 'h-[21px] bg-[#d9d9d9]' : 'h-[21px]'}>
                  <td className="pl-1">
                    <a href="#" className="flex h-[21px] items-center gap-1 whitespace-nowrap text-black"><Icon />{name}</a>
                  </td>
                  <td className="pl-1.5">11/7/2020 {time} AM</td>
                  <td className="pl-1.5">{i === 0 ? 'File folder' : 'Shortcut'}</td>
                  <td className="pr-[5px] text-right">{i === 0 ? '' : '2 KB'}</td>
                </tr>
              ))}
            </tbody>
          </table>
        </div>
        <div className="flex w-4 flex-col bg-[#f0f0f0] text-[#555]">
          <button aria-label="Scroll up" className="flex h-[17px] items-center justify-center"><ChevronDown className="rotate-180" /></button>
          <div className="flex-1 bg-[#cdcdcd]" />
          <button aria-label="Scroll down" className="flex h-[19px] items-center justify-center"><ChevronDown /></button>
        </div>
      </div>
      <footer className="flex h-[23px] shrink-0 items-center pl-3.5 text-[11px] text-[#2b3a5e]">
        <span className="w-[54px]">23 items</span>
        <span className="h-4 w-px bg-[#f0f0f0]" />
        <span className="pl-2.5 whitespace-pre">1 item selected  1.11 KB</span>
        <button aria-label="Details view" className="ml-auto flex h-[23px] w-[22px] items-center justify-center border border-[#3d93c3] bg-[#cce8f6]">
          <Svg>
            <path d="M0.500 2.500h4v11h-4zM0.500 6h4M0.500 10h4" fill="#fff" stroke="#8a8a8a" />
            <path d="M6.500 4.500h4M12 4.500h4M6.500 8h4M12 8h4M6.500 11.500h4M12 11.500h4" stroke="#6a7680" />
            <path d="M2 4.500h1M2 8h1M2 11.500h1" stroke="#444" />
          </Svg>
        </button>
        <button aria-label="Thumbnail view" className="mr-2 ml-1">
          <Svg size={14} box={16}>
            <path d="M0.500 2.500h15v11h-15z" fill="#fff" stroke="#8d8d8d" />
            <path d="M2 4h12v8H2z" fill="#7db9ee" />
            <path d="M2 8c4-1 6 2 12 1.500V12H2z" fill="#1f4f5c" />
          </Svg>
        </button>
      </footer>
    </section>
  );
}

/* ---------- ODBC dialog ---------- */

const components = [
  ['Administrator', 'odbccp32.dll'],
  ['Control Panel Startup', 'odbcad32.exe'],
  ['Cursor Library', 'odbccr32.dll'],
  ['Driver Manager', 'odbc32.dll'],
  ['Localized Resource DLL', 'odbcint.dll'],
  ['Unicode Cursor Library', 'odbccu32.dll'],
];

const tabs: [string, string][] = [
  ['User DSN', 'w-[60px]'],
  ['System DSN', 'w-[72px]'],
  ['File DSN', 'w-[54px]'],
  ['Drivers', 'w-[45px]'],
  ['Tracing', 'w-[48px]'],
  ['Connection Pooling', 'w-[103px]'],
];

const ToolboxIcon = ({ size = 16 }: { size?: number }) => (
  <Svg size={size} box={24}>
    <path d="M2 0.500h20.500v20H2z" fill="#f4f6f9" stroke="#a9b7c8" />
    <path d="M2 0h21v4H2z" fill="#5c7fb9" />
    <path d="M4 7h17M4 10h17" stroke="#b4bcc5" strokeWidth="1.500" strokeDasharray="3 2" />
    <path d="M0 14l6-4 14 1 1 8-7 5-13-2z" fill="#868e95" />
    <path d="M0 14l6-4 14 1-6 5z" fill="#c3c9cd" />
    <path d="M14 16l6-5 1 8-7 5z" fill="#6f777e" />
    <path d="M6 12.500V9.500l7 .5v3" stroke="#4d555c" strokeWidth="1.600" />
    <path d="M5 15.500l4 .5v3l-4-.5z" fill="#e8eaec" />
  </Svg>
);

function Dialog() {
  const plain = 'h-[21px] w-[73px] border border-[#adadad] bg-[#e1e1e1]';
  return (
    <section role="dialog" aria-label="ODBC Data Source Administrator (64-bit)" className="absolute top-[326px] left-[663px] flex h-[421px] w-[594px] flex-col border border-[#6c6c6c] bg-[#f0f0f0] font-['Liberation_Sans',Arial,sans-serif] text-[11px] text-black shadow-sm">
      <header className={`flex h-[30px] shrink-0 items-center gap-[5px] bg-white pr-[9px] pl-2 ${UI}`}>
        <ToolboxIcon />
        <h2 className="flex-1">ODBC Data Source Administrator (64-bit)</h2>
        <button aria-label="Close"><Close /></button>
      </header>
      <div className="flex flex-1 flex-col pt-1.5 pr-2 pl-1.5">
        <div role="tablist" className="flex items-end">
          <div className="flex pl-px">
            {tabs.map(([label, w]) => (
              <button key={label} role="tab" className={`h-[19px] border-t border-l border-[#d9d9d9] whitespace-nowrap ${w}`}>{label}</button>
            ))}
          </div>
          <button role="tab" aria-selected="true" className="relative -mb-px h-[22px] w-[45px] border border-b-0 border-[#d9d9d9] bg-white pb-0.5">About</button>
        </div>
        <div className="flex h-[325px] flex-col border border-[#dcdcdc] bg-white pt-3 pr-[11px] pl-3.5">
          <p className="h-[18px] leading-[14px]">About the ODBC core components</p>
          <div className="h-[195px] border border-[#828790] pt-0.5 pr-0.5">
            <table className="w-full table-fixed border-collapse text-left">
              <colgroup>
                <col className="w-[126px]" />
                <col className="w-[93px]" />
                <col />
              </colgroup>
              <thead>
                <tr className="h-[23px] leading-[22px]">
                  <th className="border-r border-[#e5e5e5] pl-[7px] font-normal">Description</th>
                  <th className="border-r border-[#e5e5e5] pl-1.5 font-normal">Version</th>
                  <th className="border-r border-[#e5e5e5] pl-1.5 font-normal">File</th>
                </tr>
              </thead>
              <tbody>
                {components.map(([name, file], i) => (
                  <tr key={name} className="h-[17px] leading-[17px] whitespace-nowrap">
                    <td className="pl-[5px]">
                      {i === 0 ? (
                        <span className="block w-[67px] bg-[#0078d7] pl-0.5 text-white outline-1 -outline-offset-1 outline-dotted outline-[#e08a3c]">{name}</span>
                      ) : (
                        <span className="block pl-0.5">{name}</span>
                      )}
                    </td>
                    <td className="pl-1.5">10.0.20257.1000</td>
                    <td className="pl-1.5">C:\Windows\system32\{file}</td>
                  </tr>
                ))}
              </tbody>
            </table>
          </div>
          <div className="mt-2.5 flex h-[74px] gap-[13px] border border-[#dcdcdc] pl-[9px]">
            <Svg size={32} className="mt-4">
              <path d="M6.500 0.500h19l5 5v26h-24z" fill="#fbfbfc" stroke="#b3b7bb" />
              <path d="M25.500 0.500v5h5" stroke="#b3b7bb" />
              <path d="M11 4v5M14.500 4.500h2.500v4h-2.500zM20.500 4v5M24.500 13.500h3v5h-3zM24.500 23.500h3v4h-3zM12 28v-2M17 28v-2M21 28v-2" stroke="#8f959b" strokeWidth="1.400" />
              <path d="M0.500 7.500h22v19h-22z" fill="#fff" stroke="#788490" />
              <path d="M0 7h23v4H0z" fill="#4267a5" />
              <path d="M3 14.500h17M3 18h17M3 21.500h17M3 24.500h17" stroke="#a0a6ac" strokeWidth="1.200" strokeDasharray="4 2" />
            </Svg>
            <p className="pt-[13px] leading-[13px] whitespace-nowrap">
              ODBC is a programming interface that enables applications to access data in database management
              <br />
              systems that use Structured Query Language (SQL) as a data access standard.
            </p>
          </div>
        </div>
        <div className="flex justify-end gap-2 pt-2">
          <button className="h-[21px] w-[73px] border-2 border-[#0078d7] bg-[#e1e1e1]">OK</button>
          <button className={plain}>Cancel</button>
          <button disabled className="h-[21px] w-[73px] border border-[#bfbfbf] bg-[#cccccc] text-[#838383]">Apply</button>
          <button className={plain}>Help</button>
        </div>
      </div>
    </section>
  );
}

/* ---------- Taskbar ---------- */

function Taskbar() {
  return (
    <footer className="relative flex h-10 shrink-0 bg-linear-to-r from-[#22373f] via-[#1c2f3f] to-[#16253f] text-white">
      <button aria-label="Start" className="flex w-12 items-center justify-center">
        <Svg>
          <path d="M0 2.300L6.500 1.400v6.100H0zM7.500 1.200L16 0v7.500H7.500zM0 8.500h6.500v6.100L0 13.700zM7.500 8.500H16V16l-8.500-1.200z" fill="#fff" />
        </Svg>
      </button>
      <label className="flex w-[344px] items-center gap-2.5 border border-[#b9b9b9] bg-[#f2f2f2] pl-[11px] text-[#222]">
        <Svg size={18}>
          <circle cx="11" cy="6.500" r="5.500" stroke="currentColor" strokeWidth="1.400" />
          <path d="M7 10.500L1 17" stroke="currentColor" strokeWidth="1.400" />
        </Svg>
        <input aria-label="Search" placeholder="Type here to search" className="min-w-0 flex-1 pt-0.5 text-sm outline-none placeholder:text-[#3a3a3a]" />
      </label>
      <button aria-label="Task view" className="flex w-12 items-center justify-center">
        <Svg size={18}>
          <path d="M1.500 5.500h10v7h-10zM1.500 1v2.500h10V1M1.500 17v-2.500h10V17M15.500 1v4M15.500 10v7" stroke="#fff" strokeWidth="1.200" />
          <path d="M14.500 6h2.500v3h-2.500z" fill="#fff" />
        </Svg>
      </button>
      <button aria-label="Edge" className="flex w-[54px] items-center justify-center">
        <Svg size={24}>
          <defs>
            <linearGradient id="edgeTop" x1="0" y1="0" x2="1" y2="0.300">
              <stop offset="0" stopColor="#2fa6e0" />
              <stop offset="0.500" stopColor="#2dc3c9" />
              <stop offset="1" stopColor="#62d84b" />
            </linearGradient>
            <linearGradient id="edgeBody" x1="0" y1="0" x2="0.600" y2="1">
              <stop offset="0" stopColor="#1b8fdc" />
              <stop offset="1" stopColor="#1258b2" />
            </linearGradient>
          </defs>
          <path d="M0.300 11C1 4.500 6 0 12.300 0 19 0 24 4.700 24 10c0 3.500-2.800 6-6.200 6-2.600 0-3.800-.8-3.300-1.600 1.500-2 .8-6.900-4.500-6.900-4.500 0-8.500 1.500-9.700 3.500z" fill="url(#edgeTop)" />
          <path d="M0.200 12c.5-4 5-6 9-5 3 .7 5 2.500 5.300 5-3-2-6 .500-5.800 3.500.3 4 4 6.500 8 6 2-.2 3.800-1 5-1.800C19.500 22.500 16 24 12 24 5 24-.3 18.500.2 12z" fill="url(#edgeBody)" />
          <path d="M8.700 15.500c.3 4 4 6.500 8 6 2-.2 3.800-1 5-1.800-1.200 1.600-3 3-5.200 3.800C10 23.500 7 20 8.700 15.500z" fill="#0c4f9c" />
        </Svg>
      </button>
      <button aria-label="File Explorer" className="flex w-11 items-center justify-center">
        <Svg size={22}>
          <path d="M0 2h8l2 2h12v16H0z" fill="#e8a823" />
          <path d="M0 5h22v15H0z" fill="#fbd769" />
          <path d="M3 20v-7a2 2 0 0 1 2-2h12a2 2 0 0 1 2 2v7h-4v-4H7v4z" fill="#3b8fd4" />
        </Svg>
      </button>
      <button aria-label="Control Panel" className="ml-2 flex w-10 items-center justify-center border-b-2 border-[#76b9ed] pt-0.5"><PanelIcon size={22} /></button>
      <button aria-label="ODBC" className="ml-1 flex w-12 items-center justify-center border-b-2 border-[#76b9ed] bg-[#4b5f68] pt-0.5"><ToolboxIcon size={24} /></button>
      <div className="ml-auto flex items-center">
        <Svg className="mr-[9px]" size={12}>
          <path d="M1 9l5-5 5 5" stroke="#fff" strokeWidth="1.300" />
        </Svg>
        <Svg className="mr-2">
          <path d="M3.500 2.500h12v8h-12zM9.500 11v3M6 14.500h7" stroke="#fff" strokeWidth="1.100" />
          <path d="M0.500 2.500h3v3h-3zM2 6v5h2" fill="#1a2b40" stroke="#fff" />
        </Svg>
        <Svg>
          <path d="M0.500 5.500h2l4-4v12l-4-4h-2z" stroke="#fff" />
          <circle cx="11.500" cy="11.500" r="4.500" fill="#e02b2b" />
          <path d="M9.800 9.800l3.400 3.400M13.200 9.800l-3.400 3.400" stroke="#fff" strokeWidth="1.200" />
        </Svg>
        <div className="w-[73px] text-center text-[11px] leading-[18px]">
          <div>9:29 AM</div>
          <div>11/7/2020</div>
        </div>
        <Svg className="ml-1.5" size={18}>
          <path d="M1.500 2.500h15v10h-5l-2.500 3v-3h-7.500z" stroke="#fff" strokeWidth="1.200" />
        </Svg>
        <span className="ml-[18px] h-10 w-px bg-[#5a6678]" />
        <span className="w-1.5" />
      </div>
      <div className="pointer-events-none absolute top-0 right-7 flex items-start gap-3.5 text-[#9aa3b4]/80">
        <svg width="50" height="39" viewBox="0 0 50 39" className="shrink-0" aria-hidden="true">
          <path d="M18 0h27q3 0 2 3L32 24q-1 2-4 1L4 20z" fill="#a5adb9" />
          <path d="M4 20L18 0M3 21q-3 6 3 9l22 6 19-26V6L30 28 6 22" stroke="#a5adb9" strokeWidth="3" fill="none" />
          <path d="M22 4h13" stroke="#1b2c41" strokeWidth="3" />
        </svg>
        <span className="pt-0.5 text-[17px] leading-[26px]">The Collection Book</span>
      </div>
    </footer>
  );
}

export default function App() {
  return (
    <div className={`relative flex h-screen w-full flex-col overflow-hidden bg-white ${UI}`}>
      <ControlPanel />
      <Explorer />
      <Dialog />
      <Taskbar />
    </div>
  );
}
